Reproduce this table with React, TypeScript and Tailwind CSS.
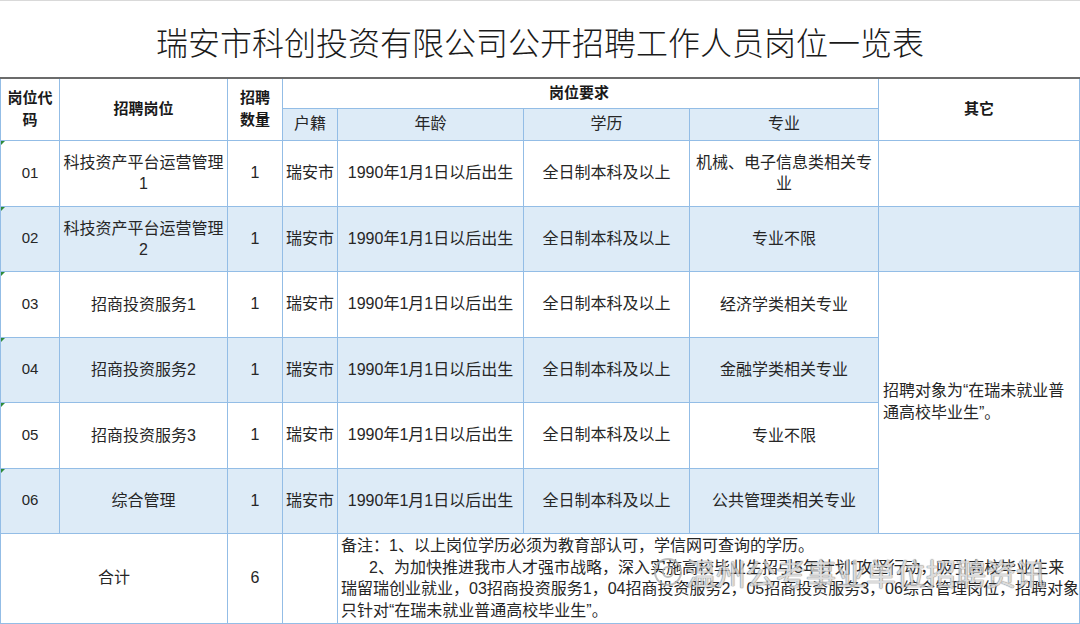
import React from 'react';

const rows = [
  { code: '01', post: ['科技资产平台运营管理', '1'], major: ['机械、电子信息类相关专', '业'], blue: false },
  { code: '02', post: ['科技资产平台运营管理', '2'], major: ['专业不限'], blue: true },
  { code: '03', post: ['招商投资服务1'], major: ['经济学类相关专业'], blue: false },
  { code: '04', post: ['招商投资服务2'], major: ['金融学类相关专业'], blue: true },
  { code: '05', post: ['招商投资服务3'], major: ['专业不限'], blue: false },
  { code: '06', post: ['综合管理'], major: ['公共管理类相关专业'], blue: true },
];

const cell = 'border border-[#93bde6] px-0 text-center align-middle whitespace-nowrap';

function Lines({ items }: { items: string[] }) {
  return (
    <>
      {items.map((t, i) => (
        <div key={i} className="leading-[21px]">{t}</div>
      ))}
    </>
  );
}

export default function App() {
  return (
    <div
      className="w-[1080px] h-[624px] overflow-hidden bg-white text-[#262626] text-[16px]"
      style={{ fontFamily: '"Liberation Sans", "Noto Sans CJK SC", sans-serif' }}
    >
      {/* title */}
      <div className="h-[77px] flex items-center justify-center border-t border-[#d9d9d9]">
        <h1
          className="text-[32px] font-light text-[#1a1a1a] pt-[4px]"
          style={{ fontFamily: '"Noto Sans CJK SC", sans-serif' }}
        >
          瑞安市科创投资有限公司公开招聘工作人员岗位一览表
        </h1>
      </div>

      <table className="table-fixed border-collapse w-[1080px] border-t-2 border-t-[#6b6b6b]">
        <colgroup>
          <col className="w-[59px]" />
          <col className="w-[168px]" />
          <col className="w-[55px]" />
          <col className="w-[55px]" />
          <col className="w-[186px]" />
          <col className="w-[166px]" />
          <col className="w-[189px]" />
          <col />
        </colgroup>
        <thead>
          <tr className="h-[30px] font-bold text-[#1a1a1a] text-[15px]">
            <th rowSpan={2} className={`${cell} border-t-[#6b6b6b] leading-[22px]`}>
              岗位代<br />码
            </th>
            <th rowSpan={2} className={`${cell} border-t-[#6b6b6b]`}>招聘岗位</th>
            <th rowSpan={2} className={`${cell} border-t-[#6b6b6b] leading-[22px]`}>
              招聘<br />数量
            </th>
            <th colSpan={4} className={`${cell} border-t-[#6b6b6b] !text-left !pl-[266px]`}>岗位要求</th>
            <th rowSpan={2} className={`${cell} border-t-[#6b6b6b]`}>其它</th>
          </tr>
          <tr className="h-[32px] bg-[#ddebf7]">
            <th className={`${cell} font-normal`}>户籍</th>
            <th className={`${cell} font-normal`}>年龄</th>
            <th className={`${cell} font-normal`}>学历</th>
            <th className={`${cell} font-normal`}>专业</th>
          </tr>
        </thead>
        <tbody>
          {rows.map((r, i) => (
            <tr key={r.code} className={`${i % 2 === 0 ? 'h-[66px]' : 'h-[65px]'} ${r.blue ? 'bg-[#ddebf7]' : ''}`}>
              <td className={`${cell} relative text-[15px]`}>
                <span className="absolute left-0 top-0 w-0 h-0 border-t-[4px] border-r-[4px] border-t-[#2e8b3a] border-r-transparent" />
                {r.code}
              </td>
              <td className={cell}>
                <Lines items={r.post} />
              </td>
              <td className={cell}>1</td>
              <td className={cell}>瑞安市</td>
              <td className={cell}>1990年1月1日以后出生</td>
              <td className={cell}>全日制本科及以上</td>
              <td className={cell}>
                <Lines items={r.major} />
              </td>
              {i < 2 && <td className={cell}></td>}
              {i === 2 && (
                <td rowSpan={4} className={`${cell} bg-white !text-left !px-[4px]`}>
                  <div className="leading-[22px]">招聘对象为“在瑞未就业普</div>
                  <div className="leading-[22px]">通高校毕业生”。</div>
                </td>
              )}
            </tr>
          ))}
          <tr className="h-[90px]">
            <td colSpan={2} className={cell}>合计</td>
            <td className={cell}>6</td>
            <td className={cell}></td>
            <td colSpan={4} className={`${cell} !text-left !px-[3px] relative`}>
              <div className="leading-[21.5px]">备注：1、以上岗位学历必须为教育部认可，学信网可查询的学历。</div>
              <div className="leading-[21.5px] pl-[28px]">
                2、为加快推进我市人才强市战略，深入实施高校毕业生招引5年计划“攻坚行动，吸引高校毕业生来
              </div>
              <div className="leading-[21.5px]">
                瑞留瑞创业就业，03招商投资服务1，04招商投资服务2，05招商投资服务3，06综合管理岗位，招聘对象
              </div>
              <div className="leading-[21.5px]">只针对“在瑞未就业普通高校毕业生”。</div>

              {/* watermark */}
              <div className="absolute left-[316px] top-[22px] flex items-center gap-1 pointer-events-none opacity-80">
                <div className="w-[28px] h-[28px] rounded-full border-2 border-[#b0b0b0] flex items-center justify-center">
                  <div className="w-[12px] h-[12px] rounded-full border-2 border-[#b0b0b0]" />
                </div>
                <span
                  className="text-[30px] leading-[32px] text-white/70 [text-shadow:0_0_1px_#777,0_0_1px_#777,0_0_1px_#777]"
                  style={{ fontFamily: '"Noto Sans CJK SC", sans-serif' }}
                >
                  温州公考事业单位招聘资讯
                </span>
              </div>
            </td>
          </tr>
        </tbody>
      </table>
    </div>
  );
}
